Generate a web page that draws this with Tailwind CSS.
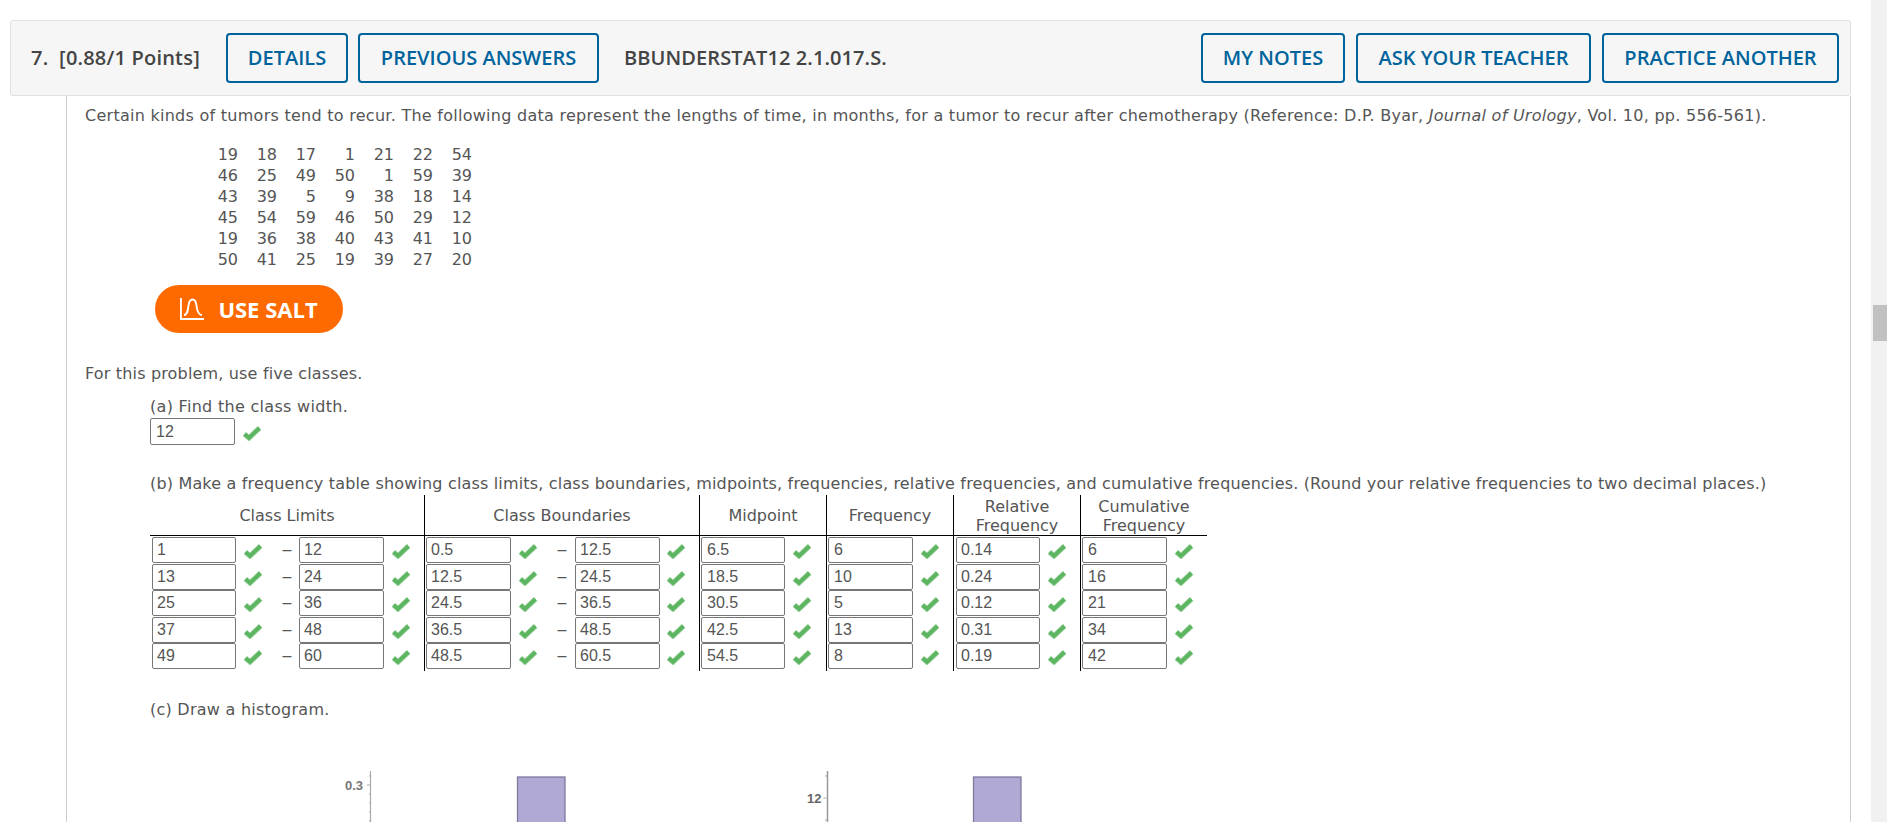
<!DOCTYPE html>
<html><head><meta charset="utf-8"><script src="https://cdn.jsdelivr.net/npm/@tailwindcss/browser@4"></script></head>
<body class="bg-white overflow-hidden">
<svg class="hidden"><symbol id="c" viewBox="0 0 20 16"><path d="M2.500 9l4.500 4L17.500 3" fill="none" stroke="#a9d6a9" stroke-width="5.400"/><path d="M2.500 9l4.500 4L17.500 3" fill="none" stroke="#5cb560" stroke-width="3.800"/></symbol></svg>
<div class="relative h-[822px] w-[1887px] overflow-hidden font-['DejaVu_Sans',sans-serif] text-[16px] text-[#555555]">
  <div class="absolute right-0 top-0 h-full w-[16px] bg-[#f1f1f1]"><div class="ml-[2px] mt-[305px] h-[36px] w-[14px] bg-[#c1c1c1]"></div></div>
  <div class="pt-[20px] pl-[10px] w-[1851px]">
    <header class="flex h-[76px] items-center rounded-[3px] border border-[#e0e0e0] bg-[#f6f6f6] pr-[11px] font-['Open_Sans',sans-serif] text-[20px]">
      <div class="ml-[20px] w-[195px] font-semibold tracking-[0.2px] text-[#444444]">7.&nbsp; [0.88/1 Points]</div>
      <button class="h-[50px] w-[122px] rounded-[4px] border-2 border-[#00639c] font-semibold text-[#00639c]">DETAILS</button>
      <button class="ml-[10px] h-[50px] w-[241px] rounded-[4px] border-2 border-[#00639c] font-semibold text-[#00639c]">PREVIOUS ANSWERS</button>
      <div class="ml-[25px] font-semibold tracking-[0.1px] text-[#444444]">BBUNDERSTAT12 2.1.017.S.</div>
      <div class="ml-auto flex gap-[11px]">
        <button class="h-[50px] w-[144px] rounded-[4px] border-2 border-[#00639c] font-semibold text-[#00639c]">MY NOTES</button>
        <button class="h-[50px] w-[235px] rounded-[4px] border-2 border-[#00639c] font-semibold text-[#00639c]">ASK YOUR TEACHER</button>
        <button class="h-[50px] w-[237px] rounded-[4px] border-2 border-[#00639c] font-semibold text-[#00639c]">PRACTICE ANOTHER</button>
      </div>
    </header>
    <main class="ml-[56px] h-[727px] border-x border-[#cccccc] pl-[18px]">
      <p class="whitespace-nowrap pt-[10px] leading-[19px] tracking-[0.266px]">Certain kinds of tumors tend to recur. The following data represent the lengths of time, in months, for a tumor to recur after chemotherapy (Reference: D.P. Byar, <i>Journal of Urology</i>, Vol. 10, pp. 556-561).</p>
      <div class="ml-[114px] mt-[19px] grid w-[273px] grid-cols-[39px_39px_39px_39px_39px_39px_39px] text-right leading-[21px]">
        <span>19</span><span>18</span><span>17</span><span>1</span><span>21</span><span>22</span><span>54</span>
        <span>46</span><span>25</span><span>49</span><span>50</span><span>1</span><span>59</span><span>39</span>
        <span>43</span><span>39</span><span>5</span><span>9</span><span>38</span><span>18</span><span>14</span>
        <span>45</span><span>54</span><span>59</span><span>46</span><span>50</span><span>29</span><span>12</span>
        <span>19</span><span>36</span><span>38</span><span>40</span><span>43</span><span>41</span><span>10</span>
        <span>50</span><span>41</span><span>25</span><span>19</span><span>39</span><span>27</span><span>20</span>
      </div>
      <button class="ml-[70px] mt-[15px] flex h-[48px] w-[188px] items-center justify-center gap-[14px] rounded-full bg-[#ff6a00] font-['Open_Sans',sans-serif] text-[22px] font-bold text-white">
        <svg width="24" height="22" viewBox="0 0 24 22" fill="none" stroke="white" stroke-width="1.900"><path d="M.9 0v21H24"/><path d="M4 17C7.500 17 8 12 8.500 7.500 9 3.500 10.500 1.500 12.500 1.500S16 3.500 16.500 7.500C17 12 18 17 22 17"/></svg>
        <span>USE SALT</span>
      </button>
      <p class="mt-[31px] leading-[19px] tracking-[0.17px]">For this problem, use five classes.</p>
      <p class="ml-[65px] mt-[14px] leading-[19px] tracking-[0.3px]">(a) Find the class width.</p>
      <div class="ml-[65px] mt-[2px] flex h-[27px] items-center font-['Liberation_Sans',sans-serif]">
        <div class="flex h-[27px] w-[85px] items-center rounded-[2px] border border-[#777777] pl-[5px]">12</div>
        <svg class="ml-[7px] mt-[3px] h-[16px] w-[20px]"><use href="#c"/></svg>
      </div>
      <p class="ml-[65px] mt-[29px] whitespace-nowrap leading-[19px] tracking-[0.17px]">(b) Make a frequency table showing class limits, class boundaries, midpoints, frequencies, relative frequencies, and cumulative frequencies. (Round your relative frequencies to two decimal places.)</p>
      <div class="ml-[65px] mt-[2px] grid w-[1057px] grid-cols-[274px_275px_127px_127px_127px_127px] text-center">
        <div class="flex h-[41px] items-center justify-center border-b border-black pt-[1px]">Class Limits</div>
        <div class="flex h-[41px] items-center justify-center border-b border-l border-black pt-[1px]">Class Boundaries</div>
        <div class="flex h-[41px] items-center justify-center border-b border-l border-black pt-[1px]">Midpoint</div>
        <div class="flex h-[41px] items-center justify-center border-b border-l border-black pt-[1px]">Frequency</div>
        <div class="flex h-[41px] items-center justify-center border-b border-l border-black pt-[1px] leading-[19px]">Relative<br>Frequency</div>
        <div class="flex h-[41px] items-center justify-center border-b border-l border-black pt-[1px] leading-[19px]">Cumulative<br>Frequency</div>
      </div>
      <div class="ml-[65px] grid w-[1057px] grid-cols-[274px_275px_127px_127px_127px_127px] font-['Liberation_Sans',sans-serif]">
        <div class="flex flex-col gap-[0.5px] pb-[2px] pl-[2px] pt-[1px]">
          <div class="flex h-[26px] items-center"><div class="flex h-[26px] w-[84px] items-center rounded-[2px] border border-[#777777] pl-[4px]">1</div><svg class="ml-[7px] mt-[2px] h-[16px] w-[20px]"><use href="#c"/></svg><span class="ml-[19px] w-[10px] text-center">–</span><div class="ml-[7px] flex h-[26px] w-[85px] items-center rounded-[2px] border border-[#777777] pl-[4px]">12</div><svg class="ml-[7px] mt-[2px] h-[16px] w-[20px]"><use href="#c"/></svg></div>
          <div class="flex h-[26px] items-center"><div class="flex h-[26px] w-[84px] items-center rounded-[2px] border border-[#777777] pl-[4px]">13</div><svg class="ml-[7px] mt-[2px] h-[16px] w-[20px]"><use href="#c"/></svg><span class="ml-[19px] w-[10px] text-center">–</span><div class="ml-[7px] flex h-[26px] w-[85px] items-center rounded-[2px] border border-[#777777] pl-[4px]">24</div><svg class="ml-[7px] mt-[2px] h-[16px] w-[20px]"><use href="#c"/></svg></div>
          <div class="flex h-[26px] items-center"><div class="flex h-[26px] w-[84px] items-center rounded-[2px] border border-[#777777] pl-[4px]">25</div><svg class="ml-[7px] mt-[2px] h-[16px] w-[20px]"><use href="#c"/></svg><span class="ml-[19px] w-[10px] text-center">–</span><div class="ml-[7px] flex h-[26px] w-[85px] items-center rounded-[2px] border border-[#777777] pl-[4px]">36</div><svg class="ml-[7px] mt-[2px] h-[16px] w-[20px]"><use href="#c"/></svg></div>
          <div class="flex h-[26px] items-center"><div class="flex h-[26px] w-[84px] items-center rounded-[2px] border border-[#777777] pl-[4px]">37</div><svg class="ml-[7px] mt-[2px] h-[16px] w-[20px]"><use href="#c"/></svg><span class="ml-[19px] w-[10px] text-center">–</span><div class="ml-[7px] flex h-[26px] w-[85px] items-center rounded-[2px] border border-[#777777] pl-[4px]">48</div><svg class="ml-[7px] mt-[2px] h-[16px] w-[20px]"><use href="#c"/></svg></div>
          <div class="flex h-[26px] items-center"><div class="flex h-[26px] w-[84px] items-center rounded-[2px] border border-[#777777] pl-[4px]">49</div><svg class="ml-[7px] mt-[2px] h-[16px] w-[20px]"><use href="#c"/></svg><span class="ml-[19px] w-[10px] text-center">–</span><div class="ml-[7px] flex h-[26px] w-[85px] items-center rounded-[2px] border border-[#777777] pl-[4px]">60</div><svg class="ml-[7px] mt-[2px] h-[16px] w-[20px]"><use href="#c"/></svg></div>
        </div>
        <div class="flex flex-col gap-[0.5px] border-l border-black pb-[2px] pl-[1px] pt-[1px]">
          <div class="flex h-[26px] items-center"><div class="flex h-[26px] w-[85px] items-center rounded-[2px] border border-[#777777] pl-[4px]">0.5</div><svg class="ml-[7px] mt-[2px] h-[16px] w-[20px]"><use href="#c"/></svg><span class="ml-[19px] w-[10px] text-center">–</span><div class="ml-[8px] flex h-[26px] w-[85px] items-center rounded-[2px] border border-[#777777] pl-[4px]">12.5</div><svg class="ml-[6px] mt-[2px] h-[16px] w-[20px]"><use href="#c"/></svg></div>
          <div class="flex h-[26px] items-center"><div class="flex h-[26px] w-[85px] items-center rounded-[2px] border border-[#777777] pl-[4px]">12.5</div><svg class="ml-[7px] mt-[2px] h-[16px] w-[20px]"><use href="#c"/></svg><span class="ml-[19px] w-[10px] text-center">–</span><div class="ml-[8px] flex h-[26px] w-[85px] items-center rounded-[2px] border border-[#777777] pl-[4px]">24.5</div><svg class="ml-[6px] mt-[2px] h-[16px] w-[20px]"><use href="#c"/></svg></div>
          <div class="flex h-[26px] items-center"><div class="flex h-[26px] w-[85px] items-center rounded-[2px] border border-[#777777] pl-[4px]">24.5</div><svg class="ml-[7px] mt-[2px] h-[16px] w-[20px]"><use href="#c"/></svg><span class="ml-[19px] w-[10px] text-center">–</span><div class="ml-[8px] flex h-[26px] w-[85px] items-center rounded-[2px] border border-[#777777] pl-[4px]">36.5</div><svg class="ml-[6px] mt-[2px] h-[16px] w-[20px]"><use href="#c"/></svg></div>
          <div class="flex h-[26px] items-center"><div class="flex h-[26px] w-[85px] items-center rounded-[2px] border border-[#777777] pl-[4px]">36.5</div><svg class="ml-[7px] mt-[2px] h-[16px] w-[20px]"><use href="#c"/></svg><span class="ml-[19px] w-[10px] text-center">–</span><div class="ml-[8px] flex h-[26px] w-[85px] items-center rounded-[2px] border border-[#777777] pl-[4px]">48.5</div><svg class="ml-[6px] mt-[2px] h-[16px] w-[20px]"><use href="#c"/></svg></div>
          <div class="flex h-[26px] items-center"><div class="flex h-[26px] w-[85px] items-center rounded-[2px] border border-[#777777] pl-[4px]">48.5</div><svg class="ml-[7px] mt-[2px] h-[16px] w-[20px]"><use href="#c"/></svg><span class="ml-[19px] w-[10px] text-center">–</span><div class="ml-[8px] flex h-[26px] w-[85px] items-center rounded-[2px] border border-[#777777] pl-[4px]">60.5</div><svg class="ml-[6px] mt-[2px] h-[16px] w-[20px]"><use href="#c"/></svg></div>
        </div>
        <div class="flex flex-col gap-[0.5px] border-l border-black pb-[2px] pl-[1px] pt-[1px]">
          <div class="flex h-[26px] items-center"><div class="flex h-[26px] w-[84px] items-center rounded-[2px] border border-[#777777] pl-[5px]">6.5</div><svg class="ml-[7px] mt-[2px] h-[16px] w-[20px]"><use href="#c"/></svg></div>
          <div class="flex h-[26px] items-center"><div class="flex h-[26px] w-[84px] items-center rounded-[2px] border border-[#777777] pl-[5px]">18.5</div><svg class="ml-[7px] mt-[2px] h-[16px] w-[20px]"><use href="#c"/></svg></div>
          <div class="flex h-[26px] items-center"><div class="flex h-[26px] w-[84px] items-center rounded-[2px] border border-[#777777] pl-[5px]">30.5</div><svg class="ml-[7px] mt-[2px] h-[16px] w-[20px]"><use href="#c"/></svg></div>
          <div class="flex h-[26px] items-center"><div class="flex h-[26px] w-[84px] items-center rounded-[2px] border border-[#777777] pl-[5px]">42.5</div><svg class="ml-[7px] mt-[2px] h-[16px] w-[20px]"><use href="#c"/></svg></div>
          <div class="flex h-[26px] items-center"><div class="flex h-[26px] w-[84px] items-center rounded-[2px] border border-[#777777] pl-[5px]">54.5</div><svg class="ml-[7px] mt-[2px] h-[16px] w-[20px]"><use href="#c"/></svg></div>
        </div>
        <div class="flex flex-col gap-[0.5px] border-l border-black pb-[2px] pl-[1px] pt-[1px]">
          <div class="flex h-[26px] items-center"><div class="flex h-[26px] w-[85px] items-center rounded-[2px] border border-[#777777] pl-[5px]">6</div><svg class="ml-[7px] mt-[2px] h-[16px] w-[20px]"><use href="#c"/></svg></div>
          <div class="flex h-[26px] items-center"><div class="flex h-[26px] w-[85px] items-center rounded-[2px] border border-[#777777] pl-[5px]">10</div><svg class="ml-[7px] mt-[2px] h-[16px] w-[20px]"><use href="#c"/></svg></div>
          <div class="flex h-[26px] items-center"><div class="flex h-[26px] w-[85px] items-center rounded-[2px] border border-[#777777] pl-[5px]">5</div><svg class="ml-[7px] mt-[2px] h-[16px] w-[20px]"><use href="#c"/></svg></div>
          <div class="flex h-[26px] items-center"><div class="flex h-[26px] w-[85px] items-center rounded-[2px] border border-[#777777] pl-[5px]">13</div><svg class="ml-[7px] mt-[2px] h-[16px] w-[20px]"><use href="#c"/></svg></div>
          <div class="flex h-[26px] items-center"><div class="flex h-[26px] w-[85px] items-center rounded-[2px] border border-[#777777] pl-[5px]">8</div><svg class="ml-[7px] mt-[2px] h-[16px] w-[20px]"><use href="#c"/></svg></div>
        </div>
        <div class="flex flex-col gap-[0.5px] border-l border-black pb-[2px] pl-[2px] pt-[1px]">
          <div class="flex h-[26px] items-center"><div class="flex h-[26px] w-[84px] items-center rounded-[2px] border border-[#777777] pl-[4px]">0.14</div><svg class="ml-[7px] mt-[2px] h-[16px] w-[20px]"><use href="#c"/></svg></div>
          <div class="flex h-[26px] items-center"><div class="flex h-[26px] w-[84px] items-center rounded-[2px] border border-[#777777] pl-[4px]">0.24</div><svg class="ml-[7px] mt-[2px] h-[16px] w-[20px]"><use href="#c"/></svg></div>
          <div class="flex h-[26px] items-center"><div class="flex h-[26px] w-[84px] items-center rounded-[2px] border border-[#777777] pl-[4px]">0.12</div><svg class="ml-[7px] mt-[2px] h-[16px] w-[20px]"><use href="#c"/></svg></div>
          <div class="flex h-[26px] items-center"><div class="flex h-[26px] w-[84px] items-center rounded-[2px] border border-[#777777] pl-[4px]">0.31</div><svg class="ml-[7px] mt-[2px] h-[16px] w-[20px]"><use href="#c"/></svg></div>
          <div class="flex h-[26px] items-center"><div class="flex h-[26px] w-[84px] items-center rounded-[2px] border border-[#777777] pl-[4px]">0.19</div><svg class="ml-[7px] mt-[2px] h-[16px] w-[20px]"><use href="#c"/></svg></div>
        </div>
        <div class="flex flex-col gap-[0.5px] border-l border-black pb-[2px] pl-[1px] pt-[1px]">
          <div class="flex h-[26px] items-center"><div class="flex h-[26px] w-[85px] items-center rounded-[2px] border border-[#777777] pl-[5px]">6</div><svg class="ml-[7px] mt-[2px] h-[16px] w-[20px]"><use href="#c"/></svg></div>
          <div class="flex h-[26px] items-center"><div class="flex h-[26px] w-[85px] items-center rounded-[2px] border border-[#777777] pl-[5px]">16</div><svg class="ml-[7px] mt-[2px] h-[16px] w-[20px]"><use href="#c"/></svg></div>
          <div class="flex h-[26px] items-center"><div class="flex h-[26px] w-[85px] items-center rounded-[2px] border border-[#777777] pl-[5px]">21</div><svg class="ml-[7px] mt-[2px] h-[16px] w-[20px]"><use href="#c"/></svg></div>
          <div class="flex h-[26px] items-center"><div class="flex h-[26px] w-[85px] items-center rounded-[2px] border border-[#777777] pl-[5px]">34</div><svg class="ml-[7px] mt-[2px] h-[16px] w-[20px]"><use href="#c"/></svg></div>
          <div class="flex h-[26px] items-center"><div class="flex h-[26px] w-[85px] items-center rounded-[2px] border border-[#777777] pl-[5px]">42</div><svg class="ml-[7px] mt-[2px] h-[16px] w-[20px]"><use href="#c"/></svg></div>
        </div>
      </div>
      <p class="ml-[65px] mt-[29px] leading-[19px] tracking-[0.25px]">(c) Draw a histogram.</p>
      <div class="ml-[255px] mt-[52px] flex font-['Liberation_Sans',sans-serif]">
        <svg width="240" height="60" viewBox="0 0 240 60">
          <path d="M30.500 0V60" stroke="#aaaaaa" stroke-width="1.200"/>
          <path d="M27 14h3M29 5h2M29 23h2M29 32h2M29 41h2M29 50h2" stroke="#aaaaaa"/>
          <text x="5" y="19" font-size="13" font-weight="700" fill="#777777">0.3</text>
          <rect x="177.500" y="6" width="47.500" height="60" fill="#b0a9d4" stroke="#7f7a9f" stroke-width="1.300"/>
        </svg>
        <svg class="ml-[220px]" width="240" height="60" viewBox="0 0 240 60">
          <path d="M27.500 0V60" stroke="#999999" stroke-width="1.500"/>
          <path d="M23.500 27h3M25 5h2M25 49h2" stroke="#aaaaaa"/>
          <text x="7" y="32" font-size="13" font-weight="700" fill="#666666">12</text>
          <rect x="173.500" y="6" width="47.500" height="60" fill="#b0a9d4" stroke="#7f7a9f" stroke-width="1.300"/>
        </svg>
      </div>
    </main>
  </div>
</div>
</body></html>
